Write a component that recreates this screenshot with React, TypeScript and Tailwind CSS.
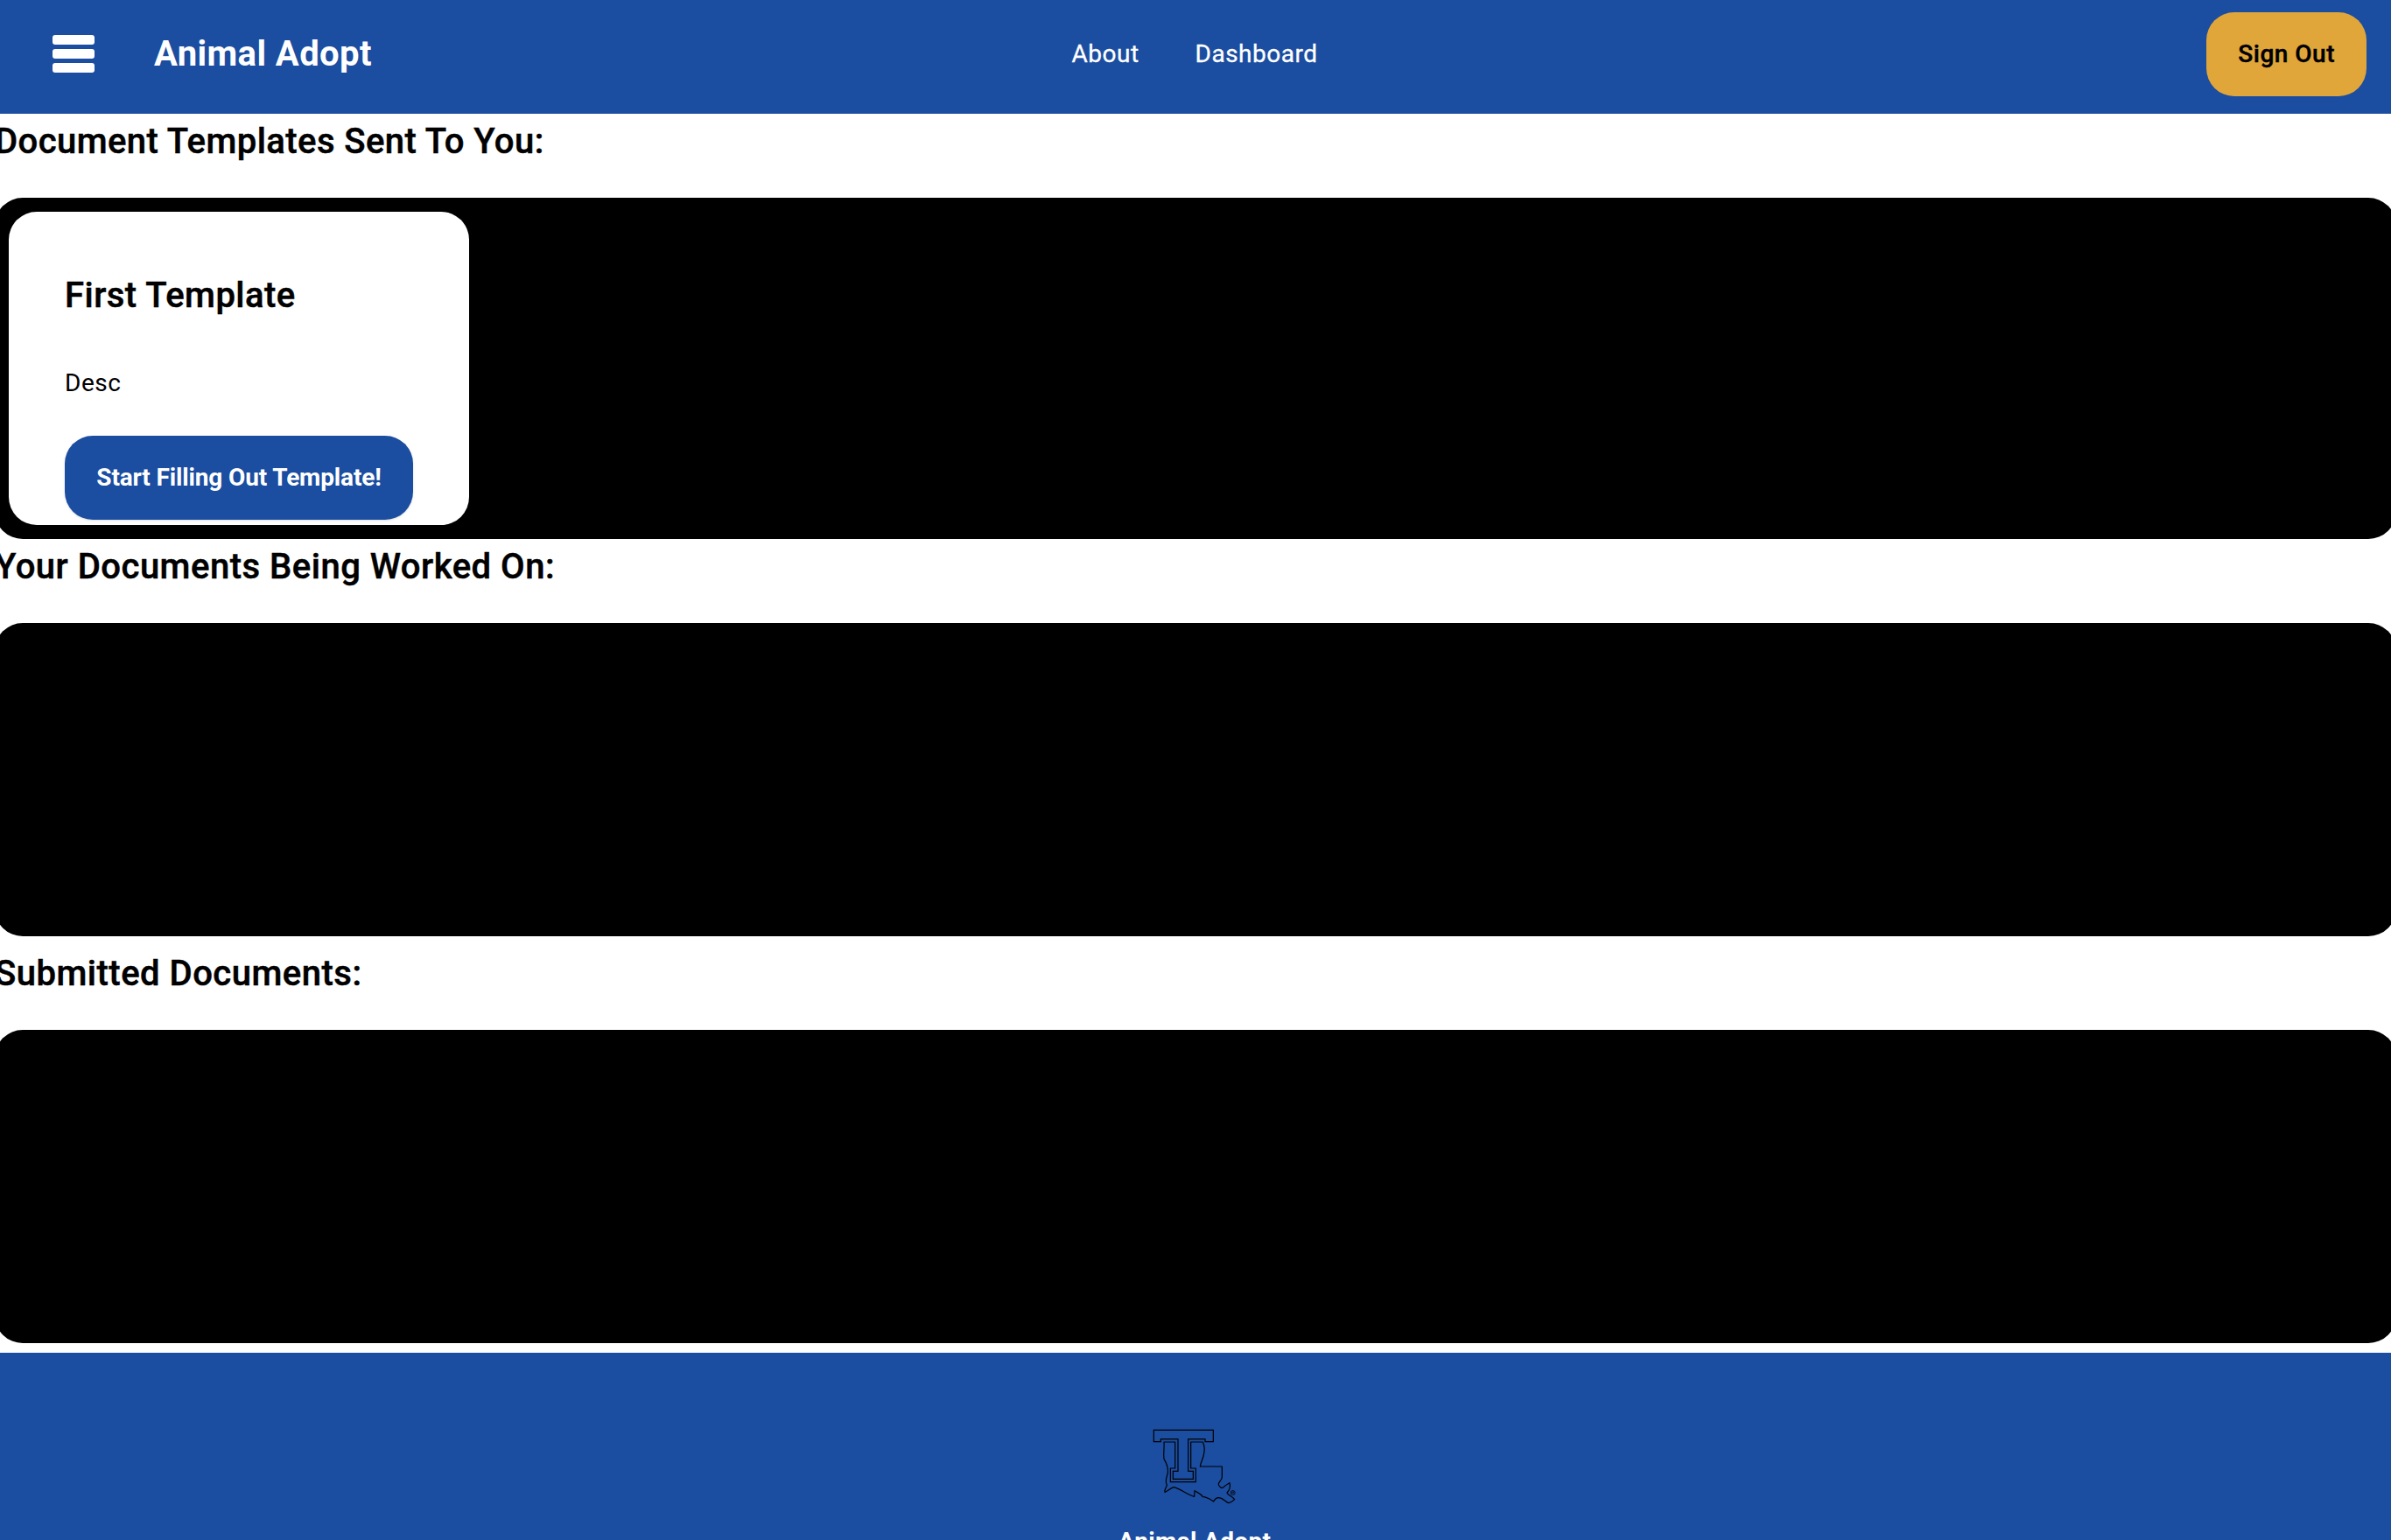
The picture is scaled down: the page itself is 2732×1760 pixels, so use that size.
import type { ReactNode } from "react";

function StateLogo() {
  return (
    <svg
      className="h-[100px] w-[110px]"
      viewBox="210 75 330 300"
      fill="none"
      stroke="#000"
      strokeWidth="3.6"
      strokeLinejoin="round"
    >
      <path
        strokeLinejoin="miter"
        d="M235 103H439V143H411V134H353V244H370V271H301V244H318V134H259V143H235Z"
      />
      <path d="M270 144H308V234H292V281H379V234H362V144H403C410 158 410 172 406 188C403 205 396 212 394 228H469V262C471 275 455 280 457 290C460 300 470 305 476 297C484 290 490 287 495 284C498 296 497 307 486 318C490 328 505 330 512 341C505 348 498 352 491 353C478 348 470 333 455 335C445 337 443 342 440 348C430 342 420 333 403 332C398 322 385 318 375 311L374 331C350 325 325 303 303 299C290 303 283 312 273 316C270 310 278 300 280 292C272 275 280 265 283 250C285 230 278 215 270 202C267 180 272 165 270 144Z" />
      <circle cx="506" cy="318" r="7.5" strokeWidth="2.4" />
      <path d="M503.500 322V314.500H508.500V318H503.500M506 318L509 322" strokeWidth="1.6" />
    </svg>
  );
}

function Shelf({ title, titleClass, children }: { title: string; titleClass: string; children?: ReactNode }) {
  return (
    <section className="-mx-1.5">
      <h2
        className={`pt-px pb-[33px] text-[40px] leading-[62px] font-medium whitespace-nowrap [-webkit-text-stroke:0.5px_black] ${titleClass}`}
      >
        {title}
      </h2>
      {children ? (
        <div className="flex rounded-[32px] bg-black p-4">{children}</div>
      ) : (
        <div className="mb-[11px] h-[358px] rounded-[32px] bg-black" />
      )}
    </section>
  );
}

export default function App() {
  return (
    <div className="flex h-[1760px] w-full flex-col overflow-hidden bg-white font-[Roboto,sans-serif] text-black">
      <header className="grid h-[130px] shrink-0 grid-cols-[1fr_auto_1fr] items-center bg-[#1b4da0] px-7 pb-1.5 text-white">
        <div className="flex items-center pl-8">
          <button className="mb-px flex w-12 flex-col gap-[5px]" aria-label="Menu">
            <span className="h-[11px] rounded-[3px] bg-white" />
            <span className="h-[11px] rounded-[3px] bg-white" />
            <span className="h-[11px] rounded-[3px] bg-white" />
          </button>
          <h1 className="ml-[68px] text-[40px] leading-[62px] font-bold tracking-[0.43px]">Animal Adopt</h1>
        </div>
        <nav className="mr-0.5 flex gap-16 text-[28px] leading-10 tracking-[0.5px] [-webkit-text-stroke:0.3px_white]">
          <a>About</a>
          <a>Dashboard</a>
        </nav>
        <button className="h-24 justify-self-end rounded-[32px] bg-[#e1a63a] px-9 text-[28px] font-medium tracking-[0.5px] text-black [-webkit-text-stroke:0.4px_black]">
          Sign Out
        </button>
      </header>

      <main className="shrink-0">
        <Shelf title="Document Templates Sent To You:" titleClass="tracking-[0.43px]">
          <article className="flex h-[358px] flex-col items-start rounded-[32px] bg-white px-16 pt-[65px]">
            <h3 className="text-[40px] leading-[62px] font-medium tracking-[0.48px] [-webkit-text-stroke:0.5px_black]">
              First Template
            </h3>
            <p className="mt-[49px] text-[28px] leading-10 tracking-[0.5px]">Desc</p>
            <button className="mt-10 h-24 w-[398px] shrink-0 rounded-[32px] bg-[#1b4da0] text-[28px] font-bold tracking-[-0.14px] whitespace-nowrap text-white shadow-sm">
              Start Filling Out Template!
            </button>
          </article>
        </Shelf>
        <Shelf title="Your Documents Being Worked On:" titleClass="tracking-[0.5px]" />
        <Shelf title="Submitted Documents:" titleClass="tracking-[0.5px]" />
      </main>

      <footer className="flex grow flex-col items-center bg-[#1b4da0] pt-[79px] pr-0.5 text-white">
        <StateLogo />
        <p className="mt-[17px] shrink-0 text-[28px] leading-10 font-bold tracking-[0.35px]">Animal Adopt</p>
      </footer>
    </div>
  );
}
